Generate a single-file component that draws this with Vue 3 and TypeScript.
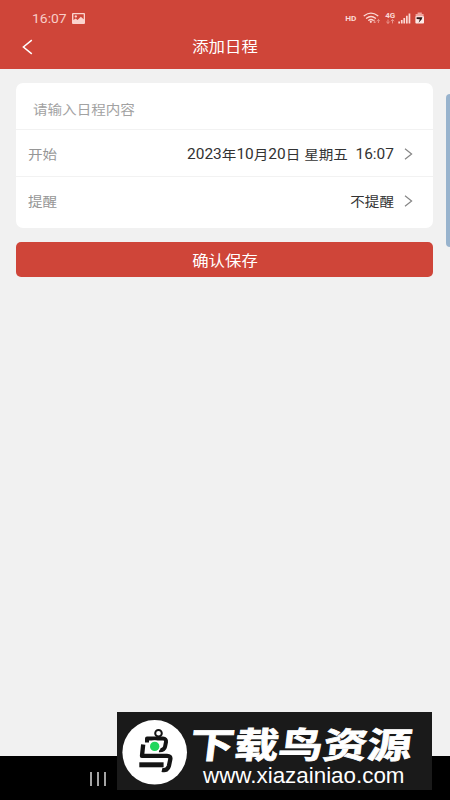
<script setup lang="ts">
import { ref } from 'vue'

interface Part {
  text: string
  latin: boolean
}

interface Row {
  label: string
  value: string
}

const time = '16:07'
const rows: Row[] = [
  { label: '开始', value: '2023年10月20日 星期五  16:07' },
  { label: '提醒', value: '不提醒' },
]
const content = ref('')

// Splits a value so that digits and hanzi can be sized separately.
function parts(value: string): Part[] {
  return (value.match(/[\d:\s]+|[^\d:\s]+/g) ?? []).map((text) => ({
    text,
    latin: /^[\d:\s]/.test(text),
  }))
}
</script>

<template>
  <div class="screen">
    <header class="header">
      <div class="status">
        <div class="status-left">
          <span class="clock">{{ time }}</span>
          <svg class="picture" width="13" height="11" viewBox="0 0 13 11">
            <path fill="#fbd3ce" fill-rule="evenodd" d="M1 0H12Q13 0 13 1V10Q13 11 12 11H1Q0 11 0 10V1Q0 0 1 0ZM1.4 1.3V7L3.7 5.4 5.5 7 8.8 3.8 11.7 6.2V1.3ZM3.8 2.2A1.2 1.2 0 1 1 3.79 2.2Z" />
          </svg>
        </div>
        <svg class="signals" width="82" height="16" viewBox="344 10 82 16">
          <text x="345.3" y="20.6" font-size="8" font-weight="700" textLength="11.2" lengthAdjust="spacingAndGlyphs" fill="#fbd9d5">HD</text>
          <g fill="none" stroke="#fbd9d5" stroke-width="1.4" stroke-linecap="round">
            <path d="M364.2 15.7Q371 10.6 377.8 15.7" />
            <path d="M366.5 18.2Q371 14.8 375.5 18.2" />
            <path d="M368.8 20.3Q371 18.7 373.2 20.3" />
          </g>
          <circle cx="370.8" cy="21.8" r="1.1" fill="#fbd9d5" />
          <g fill="none" stroke="#ec9d95" stroke-width=".9">
            <path d="M374.6 19.5V23M373.2 21.6 374.6 23 376 21.6M378.4 23V19.5M377 20.9 378.4 19.5 379.8 20.9" />
            <path d="M388 19.5V23.4M386.3 21.8 388 23.4 389.7 21.8M392.5 23.4V19.5M390.8 21.1 392.5 19.5 394.2 21.1" />
          </g>
          <text x="385.3" y="18.1" font-size="7.6" font-weight="700" textLength="10" lengthAdjust="spacingAndGlyphs" fill="#fbd9d5">4G</text>
          <path fill="#fbd9d5" d="M398.3 21.5h1.7v2h-1.7zM400.9 20h1.7v3.5h-1.7zM403.4 18h1.7v5.5h-1.7zM406 15.8h1.7v7.7h-1.7zM408.6 13.5h1.7v10h-1.7z" />
          <path fill="#f0a49d" d="M417.6 12.6h4.2v1.4h1.8v3h-8v-3h2z" />
          <rect x="415.4" y="16.2" width="8.6" height="7.4" rx=".8" fill="#fde9e6" />
          <path fill="#2a1513" d="M416.6 17.3H422.4L421.6 19.5 418.6 22.8 419.8 19.3 416.6 19.1z" />
        </svg>
      </div>
      <div class="titlebar">
        <svg class="back" width="11" height="16" viewBox="0 0 11 16">
          <path d="M9.8 1.2 1.4 8 9.8 14.8" fill="none" stroke="#fff" stroke-width="1.5" />
        </svg>
        <h1 class="title">添加日程</h1>
      </div>
    </header>

    <main class="body">
      <section class="card">
        <div class="row entry">
          <input v-model="content" class="field" type="text" placeholder="请输入日程内容" />
        </div>
        <div v-for="row in rows" :key="row.label" class="row">
          <span class="label">{{ row.label }}</span>
          <span class="value"><span v-for="(part, i) in parts(row.value)" :key="i" :class="{ latin: part.latin }">{{ part.text }}</span></span>
          <svg class="chevron" width="9" height="12" viewBox="0 0 9 12">
            <path d="M1 .8 7.6 6 1 11.2" fill="none" stroke="#858585" stroke-width="1.2" />
          </svg>
        </div>
      </section>
      <button class="save" type="button"><span>确认保存</span></button>
    </main>

    <footer class="nav">
      <span class="recents"><i></i><i></i><i></i></span>
    </footer>

    <div class="edge-handle"></div>

    <div class="banner">
      <svg width="315" height="78" viewBox="117 712 315 78">
        <circle cx="154.7" cy="752.3" r="32.3" fill="#fff" />
        <g fill="none" stroke="#141414" stroke-linejoin="round">
          <circle cx="158.5" cy="733.3" r="3.3" stroke-width="2" />
          <path d="M147 742.5V738.6H163Q166.4 738.6 166 742L165 746.8Q164.2 750.4 159 750.2" stroke-width="4" />
          <path d="M143.2 744.4 142 755.8H167Q171 755.8 170.3 759.3L168.9 766Q167.6 771.2 162 769.8" stroke-width="4.3" />
          <path d="M139.3 764.8H163.6" stroke-width="5" />
        </g>
        <circle cx="154.7" cy="746.4" r="6.2" fill="#fff" />
        <circle cx="154.7" cy="746.4" r="4.7" fill="#20d65d" />
        <text class="brand" transform="translate(188.5 757.6) skewX(-7)" x="0" y="0" textLength="222" lengthAdjust="spacingAndGlyphs">下载鸟资源</text>
        <text class="site" x="203" y="783" textLength="201.5" lengthAdjust="spacingAndGlyphs">www.xiazainiao.com</text>
      </svg>
    </div>
  </div>
</template>

<style>
body {
  margin: 0;
  overflow: hidden;
}
</style>

<style scoped>
.screen {
  position: relative;
  display: flex;
  flex-direction: column;
  width: 450px;
  height: 800px;
  overflow: hidden;
  background: #f1f1f1;
  font-family: Roboto, "Noto Sans CJK SC", sans-serif;
}
.header {
  box-sizing: border-box;
  height: 69.4px;
  flex: none;
  background: #cf4539;
  color: #fff;
}
.status {
  display: flex;
  justify-content: space-between;
  height: 26px;
  padding: 10px 24px 0 32px;
  box-sizing: border-box;
}
.status-left {
  display: flex;
  align-items: center;
  height: 17px;
}
.clock {
  width: 40px;
  font-size: 13px;
  line-height: 17px;
  color: #f8cdc8;
  white-space: nowrap;
  transform: scaleX(1.07);
  transform-origin: left center;
}
.titlebar {
  display: grid;
  grid-template-columns: 60px 1fr 60px;
  align-items: center;
  height: 41px;
}
.back {
  margin-left: 22px;
}
.title {
  margin: 0;
  padding-top: 2px;
  text-align: center;
  font-size: 14.5px;
  font-weight: 400;
  line-height: 20px;
  transform: scaleX(1.13);
}
.body {
  flex: 1;
  padding: 14px 17px 0 16px;
}
.card {
  height: 145px;
  border-radius: 7px;
  background: #fff;
}
.row {
  display: flex;
  align-items: center;
  box-sizing: border-box;
  height: 47px;
  padding: 0 20px 0 12px;
  border-bottom: 1.5px solid #f2f2f2;
}
.row:last-child {
  border-bottom: 0;
}
.entry {
  padding: 7px 0 0 17px;
}
.field {
  width: 340px;
  padding: 0;
  border: 0;
  outline: 0;
  background: none;
  font: inherit;
  font-size: 13px;
  transform: scaleX(1.12);
  transform-origin: left center;
}
.field::placeholder {
  color: #a2a2a2;
  opacity: 1;
}
.label {
  font-size: 13px;
  color: #969696;
  transform: scaleX(1.12);
  transform-origin: left center;
}
.value {
  flex: 1;
  font-size: 13px;
  text-align: right;
  white-space: pre;
  color: #333;
  transform: scaleX(1.12);
  transform-origin: right center;
}
.latin {
  font-size: 13.8px;
}
.chevron {
  flex: none;
  margin: 1px 0 0 10px;
}
.save {
  display: flex;
  align-items: center;
  justify-content: center;
  width: 100%;
  height: 35px;
  margin-top: 14px;
  padding: 0;
  border: 0;
  border-radius: 5px;
  background: #cf4539;
  color: #fff;
  font: inherit;
  font-size: 14.5px;
}
.save span {
  transform: scaleX(1.13);
}
.nav {
  flex: none;
  height: 44.5px;
  background: #000;
}
.recents {
  display: flex;
  gap: 5px;
  padding: 16.5px 0 0 89.5px;
}
.recents i {
  width: 2px;
  height: 13.5px;
  background: #a4a4a4;
}
.edge-handle {
  position: absolute;
  top: 94px;
  right: 0;
  width: 4.5px;
  height: 153px;
  border-radius: 4px 0 0 4px;
  background: #98b3cd;
}
.banner {
  position: absolute;
  left: 117px;
  top: 712px;
  width: 315px;
  height: 78px;
  background: #1a1a1a;
}
.banner svg {
  display: block;
}
.brand {
  font-family: "Noto Sans CJK SC", sans-serif;
  font-size: 35.5px;
  font-weight: 700;
  fill: #fff;
  stroke: #fff;
  stroke-width: 0.8px;
}
.site {
  font-family: "Liberation Sans", sans-serif;
  font-size: 21.5px;
  fill: #fff;
}
</style>
